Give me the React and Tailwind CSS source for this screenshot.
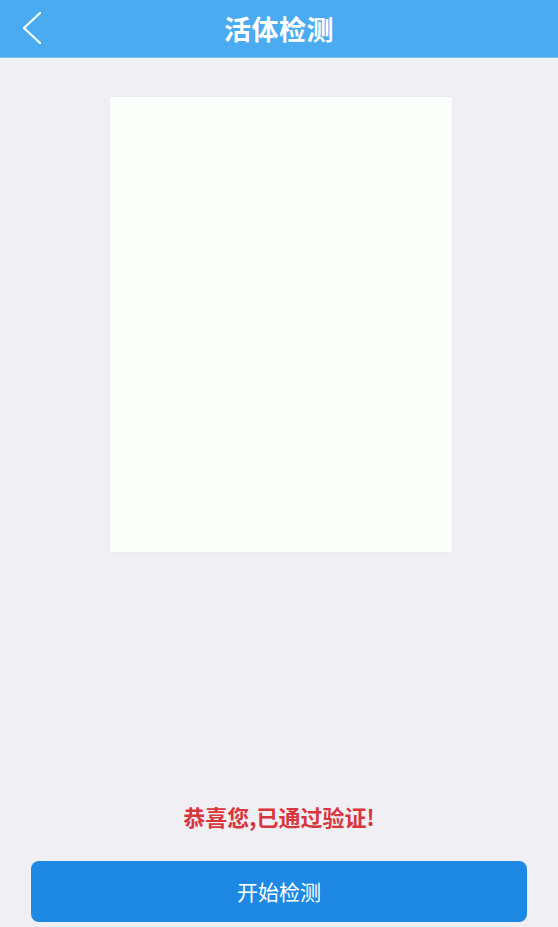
export default function App() {
  return (
    <div
      className="flex min-h-[927px] flex-col bg-[#efeff4]"
      style={{ fontFamily: '"Noto Sans CJK SC", "Noto Sans", sans-serif' }}
    >
      {/* Header */}
      <div className="relative flex h-[58px] items-center justify-center border-b border-[#7cc2f3] bg-[#4aabf1]">
        <button className="absolute left-[16px] top-[10px] flex h-[36px] w-[30px] items-center justify-center">
          <svg width="24" height="34" viewBox="0 0 24 34" fill="none">
            <path d="M21 2 L5 17 L21 32" stroke="white" strokeWidth="2.2" strokeLinecap="round" strokeLinejoin="round" />
          </svg>
        </button>
        <h1 className="text-[27px] font-bold leading-none tracking-[0.5px] text-white">活体检测</h1>
      </div>

      {/* Preview */}
      <div className="flex justify-center pl-[3px] pt-[39px]">
        <div className="h-[455px] w-[342px] bg-[#fbfffb] shadow-[0_0_2px_rgba(0,0,0,0.05)]" />
      </div>

      <div className="flex-1" />

      {/* Result */}
      <p className="text-center text-[22px] font-bold leading-none text-[#d8363c]">恭喜您,已通过验证!</p>

      <div className="px-[31px] pb-[5px] pt-[34px]">
        <button className="flex h-[61px] w-full items-center justify-center rounded-[8px] bg-[#1e88e5] text-[21px] text-white">
          开始检测
        </button>
      </div>
    </div>
  );
}
